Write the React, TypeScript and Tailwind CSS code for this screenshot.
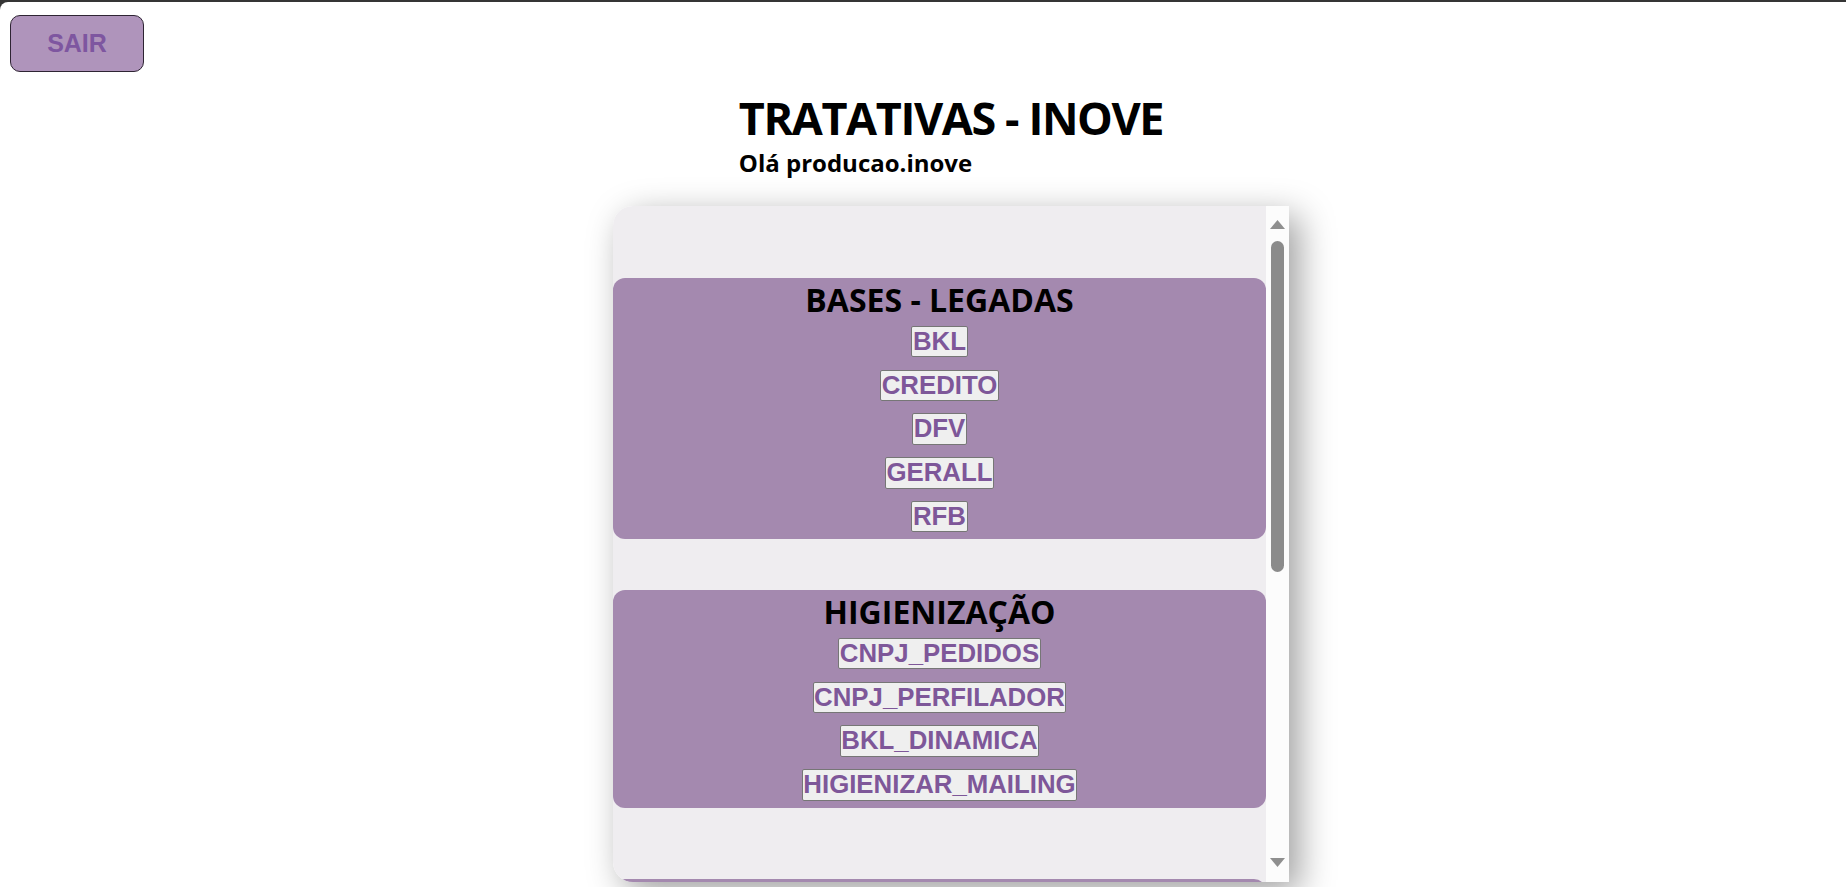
import * as React from "react";

const legadas = ["BKL", "CREDITO", "DFV", "GERALL", "RFB"];
const higienizacao = [
	"CNPJ_PEDIDOS",
	"CNPJ_PERFILADOR",
	"BKL_DINAMICA",
	"HIGIENIZAR_MAILING",
];

function Section({ title, items }: { title: string; items: string[] }) {
	return (
		<div className="flex flex-col items-center rounded-[12px] bg-[#a489af] pt-[3.6px] pb-[7px]">
			<h2 className="font-['Open_Sans',sans-serif] text-[32px] leading-[36px] font-bold text-black">
				{title}
			</h2>
			<div className="mt-[8.4px] flex flex-col items-center gap-[12.25px]">
				{items.map((item) => (
					<button
						key={item}
						type="button"
						className="rounded-[2px] border border-[#767676] bg-[#efefef] px-[0.5px] font-['Liberation_Sans',Arial,sans-serif] text-[25.8px] leading-[29.5px] font-bold text-[#7e5799]"
					>
						{item}
					</button>
				))}
			</div>
		</div>
	);
}

function Scrollbar() {
	return (
		<div className="flex w-[23px] shrink-0 flex-col items-center bg-[#fcfcfc]">
			<svg width="15" height="9" viewBox="0 0 15 9" className="mt-[14px]">
				<path d="M7.5 0 L15 9 L0 9 Z" fill="#8f8f8f" />
			</svg>
			<div className="mt-[12px] h-[331px] w-[13px] rounded-full bg-[#8b8b8b]" />
			<div className="flex-1" />
			<svg width="15" height="9" viewBox="0 0 15 9" className="mb-[15px]">
				<path d="M0 0 L15 0 L7.5 9 Z" fill="#8f8f8f" />
			</svg>
		</div>
	);
}

export default function App() {
	return (
		<div className="min-h-screen bg-[#353535] pt-[2px]">
			<div className="min-h-[885px] overflow-hidden rounded-tl-[8px] bg-white">
				{/* Logout */}
				<button
					type="button"
					className="mt-[13px] ml-[10px] h-[57px] w-[134px] rounded-[10px] border border-[#2e2433] bg-[#af94bb] font-['Liberation_Sans',Arial,sans-serif] text-[25px] font-bold text-[#7e56a0]"
				>
					SAIR
				</button>

				{/* Main */}
				<div className="ml-[56px] flex flex-col items-center">
					<div className="mt-[17.5px] flex flex-col items-start">
						<h1 className="font-['Open_Sans',sans-serif] text-[45px] leading-[56px] font-bold tracking-[-1.4px] text-black">
							TRATATIVAS - INOVE
						</h1>
						<p className="mt-[3px] font-['Open_Sans',sans-serif] text-[24px] leading-[28px] font-bold text-black">
							Olá producao.inove
						</p>
					</div>

					{/* Card */}
					<div className="mt-[29.5px] flex h-[676px] w-[676px] rounded-l-[20px] shadow-[10px_10px_35px_rgba(0,0,0,0.38)]">
						<div className="h-full flex-1 overflow-hidden rounded-l-[20px] bg-[#efedf0] pt-[72px]">
							<Section title="BASES - LEGADAS" items={legadas} />
							<div className="mt-[50.5px]">
								<Section title="HIGIENIZAÇÃO" items={higienizacao} />
							</div>
							<div className="mt-[71.25px] h-[200px] rounded-[12px] bg-[#a489af]" />
						</div>
						<Scrollbar />
					</div>
				</div>
			</div>
		</div>
	);
}
